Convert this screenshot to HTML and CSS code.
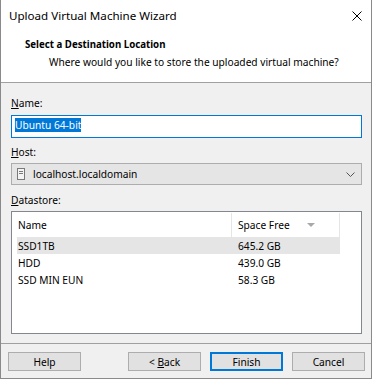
FILE: index.html
```html
<!DOCTYPE html>
<html lang="en">
<head>
    <meta charset="UTF-8">
    <title>Upload Virtual Machine Wizard</title>
    <link rel="stylesheet" href="styles.css">
</head>
<body>
    <div class="window">
        <!-- Title bar -->
        <div class="titlebar">
            <span class="title">Upload Virtual Machine Wizard</span>
            <svg class="close" width="10" height="10" viewBox="0 0 10 10">
                <path d="M0.5 0.5 L9.5 9.5 M9.5 0.5 L0.5 9.5" stroke="#000" stroke-width="1" fill="none"/>
            </svg>
        </div>

        <!-- Wizard header -->
        <div class="header">
            <div class="header-title">Select a Destination Location</div>
            <div class="header-sub">Where would you like to store the uploaded virtual machine?</div>
        </div>

        <div class="content">
            <div class="field-label"><u>N</u>ame:</div>
            <div class="textbox"><span class="selected">Ubuntu 64-bit</span></div>

            <div class="field-label host-label"><u>H</u>ost:</div>
            <div class="combo">
                <svg class="host-icon" width="8" height="12" viewBox="0 0 8 12">
                    <rect x="0.5" y="0.5" width="7" height="11" fill="#f4f4f4" stroke="#7a7a7a"/>
                    <path d="M2 3.5 H6 M2 5.5 H6" stroke="#7a7a7a" stroke-width="1"/>
                </svg>
                <span class="combo-text">localhost.localdomain</span>
                <svg class="chevron" width="9" height="5" viewBox="0 0 9 5">
                    <path d="M0.5 0.5 L4.5 4.5 L8.5 0.5" stroke="#555" stroke-width="1" fill="none"/>
                </svg>
            </div>

            <div class="field-label ds-label"><u>D</u>atastore:</div>
            <div class="listview">
                <div class="lv-header">
                    <div class="col col-name">Name</div>
                    <div class="col col-free">
                        <span>Space Free</span>
                        <svg class="sort" width="8" height="4" viewBox="0 0 8 4">
                            <path d="M0 0 H8 L4 4 Z" fill="#a8a8a8"/>
                        </svg>
                    </div>
                </div>
                <div class="lv-row hover">
                    <div class="col col-name">SSD1TB</div>
                    <div class="col col-free">645.2 GB</div>
                </div>
                <div class="lv-row">
                    <div class="col col-name">HDD</div>
                    <div class="col col-free">439.0 GB</div>
                </div>
                <div class="lv-row">
                    <div class="col col-name">SSD MIN EUN</div>
                    <div class="col col-free">58.3 GB</div>
                </div>
            </div>
        </div>

        <div class="footer">
            <button class="btn">Help</button>
            <button class="btn btn-back">&lt; <u>B</u>ack</button>
            <button class="btn btn-default">Finish</button>
            <button class="btn">Cancel</button>
        </div>
    </div>
</body>
</html>
```

FILE: styles.css
```css
body {
    margin: 0;
    font-family: 'Noto Sans', 'Open Sans', sans-serif;
    font-size: 10.2px;
    color: #000;
    background-color: #fff;
}
.window {
    width: 372px;
    height: 379px;
    box-sizing: border-box;
    border-left: 1px solid #8a8a8a;
    border-right: 1px solid #8a8a8a;
    border-bottom: 1px solid #8a8a8a;
    background-color: #f0f0f0;
    display: flex;
    flex-direction: column;
}
.titlebar {
    height: 31px;
    background-color: #fff;
    display: flex;
    align-items: center;
    justify-content: space-between;
    padding: 0 9px 0 8px;
    flex-shrink: 0;
}
.title {
    font-size: 11.6px;
    line-height: 14px;
    padding-top: 1px;
}
.close {
    display: block;
    margin-top: 1px;
}
.header {
    height: 52px;
    box-sizing: border-box;
    background-color: #fff;
    border-bottom: 1px solid #a0a0a0;
    padding: 7px 0 0 24px;
    flex-shrink: 0;
}
.header-title {
    font-weight: bold;
    font-size: 9.7px;
    line-height: 14px;
}
.header-sub {
    line-height: 14px;
    margin-top: 3px;
    padding-left: 24px;
}
.content {
    padding: 12px 9px 0 10px;
}
.field-label {
    line-height: 16px;
}
.field-label u {
    text-underline-offset: 1px;
}
.host-label {
    margin-top: 6px;
}
.ds-label {
    margin-top: 7px;
}
.textbox {
    margin-top: 4px;
    height: 23px;
    box-sizing: border-box;
    border: 1px solid #0078d7;
    background-color: #fff;
    padding: 2px 0 0 3px;
}
.selected {
    display: inline-block;
    background-color: #0078d7;
    color: #fff;
    line-height: 14px;
    height: 14px;
}
.combo {
    margin-top: 3px;
    height: 22px;
    box-sizing: border-box;
    border: 1px solid #adadad;
    background-color: #e5e5e5;
    display: flex;
    align-items: center;
    padding: 0 6px 0 5px;
}
.host-icon {
    display: block;
    margin-right: 8px;
}
.combo-text {
    flex: 1;
    line-height: 14px;
}
.chevron {
    display: block;
}
.listview {
    margin-top: 3px;
    height: 123px;
    box-sizing: border-box;
    border: 1px solid #828790;
    background-color: #fff;
    padding: 1px 0 0 5px;
}
.lv-header {
    display: flex;
    height: 24px;
}
.lv-header .col {
    border-right: 1px solid #e5e5e5;
    align-items: center;
}
.lv-row {
    display: flex;
    height: 17px;
    width: 323px;
}
.lv-row.hover {
    background-color: #e5e5e5;
}
.col {
    display: flex;
    align-items: center;
    box-sizing: border-box;
    line-height: 14px;
}
.col-name {
    width: 215px;
    padding-left: 1px;
}
.col-free {
    width: 108px;
    padding-left: 6px;
}
.lv-header .col-free {
    justify-content: space-between;
    padding-right: 24px;
}
.sort {
    display: block;
}
.footer {
    margin-top: 9px;
    border-top: 1px solid #a0a0a0;
    padding: 8px 6px 0 7px;
    display: flex;
    gap: 9px;
}
.btn {
    width: 73px;
    height: 19px;
    box-sizing: border-box;
    border: 1px solid #adadad;
    background-color: #e1e1e1;
    font-family: 'Noto Sans', 'Open Sans', sans-serif;
    font-size: 10.2px;
    color: #000;
    padding: 0;
    margin: 0;
}
.btn-back {
    margin-left: auto;
}
.btn-default {
    border: 2px solid #0078d7;
}
```
